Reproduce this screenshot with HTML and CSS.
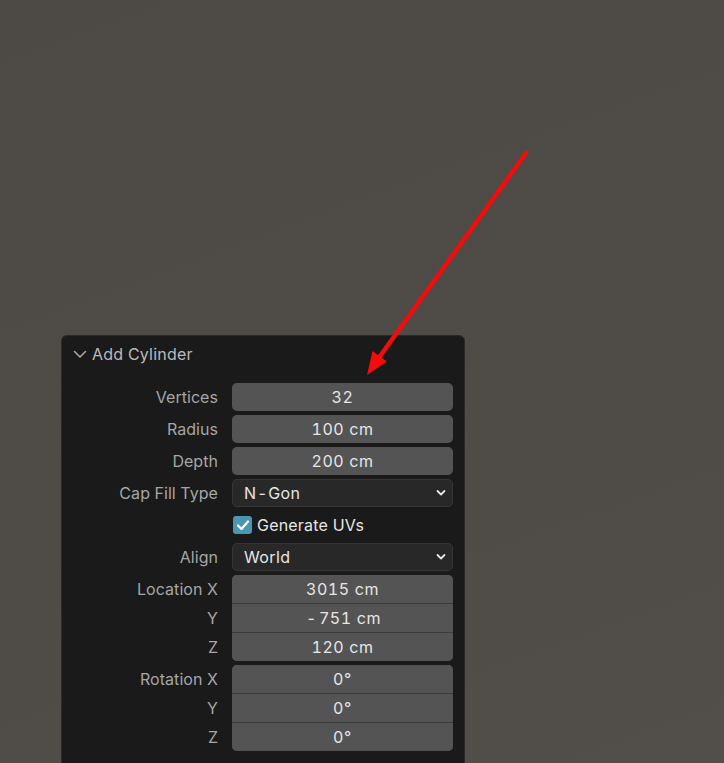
FILE: index.html
```html
<!DOCTYPE html>
<html>
<head>
<meta charset="utf-8">
<link rel="stylesheet" href="styles.css">
</head>
<body>
<div class="viewport">
  <div class="panel">
    <div class="panel-header">
      <svg class="chev" width="14" height="14" viewBox="0 0 14 14"><path d="M1.5 4.5 L7 10 L12.5 4.5" fill="none" stroke="#a9a9a9" stroke-width="1.5" stroke-linecap="round" stroke-linejoin="round"/></svg>
      <span class="title">Add Cylinder</span>
    </div>
    <div class="props">
      <div class="row">
        <div class="labels"><span class="lbl">Vertices</span></div>
        <div class="fields"><div class="num">32</div></div>
      </div>
      <div class="row">
        <div class="labels"><span class="lbl">Radius</span></div>
        <div class="fields"><div class="num">100 cm</div></div>
      </div>
      <div class="row">
        <div class="labels"><span class="lbl">Depth</span></div>
        <div class="fields"><div class="num">200 cm</div></div>
      </div>
      <div class="row">
        <div class="labels"><span class="lbl">Cap Fill Type</span></div>
        <div class="fields"><div class="menu"><span>N<span class="hy">-</span>Gon</span><svg width="10" height="8" viewBox="0 0 10 8"><path d="M1.5 2 L5 5.5 L8.5 2" fill="none" stroke="#e6e6e6" stroke-width="1.8" stroke-linecap="round" stroke-linejoin="round"/></svg></div></div>
      </div>
      <div class="row">
        <div class="labels"></div>
        <div class="fields"><div class="check"><span class="box"><svg width="14" height="12" viewBox="0 0 14 12"><path d="M2 6.5 L5.5 10 L12 2.5" fill="none" stroke="#ffffff" stroke-width="2.2" stroke-linecap="round" stroke-linejoin="round"/></svg></span><span class="check-label">Generate UVs</span></div></div>
      </div>
      <div class="row">
        <div class="labels"><span class="lbl">Align</span></div>
        <div class="fields"><div class="menu"><span>World</span><svg width="10" height="8" viewBox="0 0 10 8"><path d="M1.5 2 L5 5.5 L8.5 2" fill="none" stroke="#e6e6e6" stroke-width="1.8" stroke-linecap="round" stroke-linejoin="round"/></svg></div></div>
      </div>
      <div class="row">
        <div class="labels stack"><span class="lbl">Location X</span><span class="lbl">Y</span><span class="lbl">Z</span></div>
        <div class="fields group"><div class="num">3015 cm</div><div class="num"><span class="hy">-</span>751 cm</div><div class="num">120 cm</div></div>
      </div>
      <div class="row">
        <div class="labels stack"><span class="lbl">Rotation X</span><span class="lbl">Y</span><span class="lbl">Z</span></div>
        <div class="fields group"><div class="num">0°</div><div class="num">0°</div><div class="num">0°</div></div>
      </div>
    </div>
  </div>
  <svg class="arrow" width="724" height="763" viewBox="0 0 724 763">
    <line x1="526" y1="153" x2="378" y2="359" stroke="#f20c0c" stroke-width="4.5" stroke-linecap="round"/>
    <polygon points="367,375 372.5,351 387,361.5" fill="#f20c0c"/>
  </svg>
</div>
</body>
</html>
```

FILE: styles.css
```css
html, body {
  margin: 0;
  padding: 0;
}
body {
  width: 724px;
  height: 763px;
  overflow: hidden;
  background: #4e4b47;
  font-family: "Inter", "DejaVu Sans", sans-serif;
  font-size: 16px;
}
.viewport {
  position: relative;
  width: 724px;
  height: 763px;
  padding: 335px 0 0 61px;
  box-sizing: border-box;
  background: linear-gradient(160deg, #4d4a46 0%, #4f4c48 60%, #524e4a 100%);
}
.panel {
  width: 404px;
  height: 460px;
  box-sizing: border-box;
  background: #1a1a1a;
  border: 1px solid #2a2a2a;
  border-radius: 6px;
}
.panel-header {
  height: 36px;
  display: flex;
  align-items: center;
  padding-left: 11px;
  gap: 5px;
}
.chev {
  display: block;
}
.title {
  color: #bababa;
  font-size: 16px;
  letter-spacing: 0.2px;
}
.props {
  margin-top: 11px;
  display: flex;
  flex-direction: column;
  gap: 4px;
}
.row {
  display: grid;
  grid-template-columns: 156px 221px;
  column-gap: 14px;
}
.labels {
  display: flex;
  flex-direction: column;
  align-items: flex-end;
}
.labels.stack {
  gap: 1px;
}
.lbl {
  height: 28px;
  line-height: 28px;
  color: #a6a6a6;
  white-space: nowrap;
  letter-spacing: 0.05px;
}
.fields {
  display: flex;
  flex-direction: column;
}
.num {
  height: 28px;
  line-height: 28px;
  background: #545454;
  border-radius: 5px;
  text-align: center;
  color: #e6e6e6;
  box-sizing: border-box;
  font-variant-numeric: tabular-nums;
  letter-spacing: 0.6px;
}
.hy {
  margin: 0 2px;
}
.group {
  background: #545454;
  border-radius: 5px;
  overflow: hidden;
}
.group .num {
  border-radius: 0;
}
.group .num + .num {
  border-top: 1px solid #3c3c3c;
  height: 29px;
}
.menu {
  height: 28px;
  box-sizing: border-box;
  background: #282828;
  border: 1px solid #363636;
  border-radius: 5px;
  display: flex;
  align-items: center;
  justify-content: space-between;
  padding: 0 6px 0 11px;
  color: #e6e6e6;
  letter-spacing: 0.4px;
}
.menu svg {
  display: block;
}
.check {
  height: 28px;
  display: flex;
  align-items: center;
  gap: 5px;
  padding-left: 1px;
}
.box {
  width: 19px;
  height: 18px;
  background: #4a96b3;
  border-radius: 3px;
  display: flex;
  align-items: center;
  justify-content: center;
}
.box svg {
  display: block;
}
.check-label {
  color: #e6e6e6;
  letter-spacing: 0.2px;
}
.arrow {
  position: absolute;
  left: 0;
  top: 0;
  pointer-events: none;
}
```
